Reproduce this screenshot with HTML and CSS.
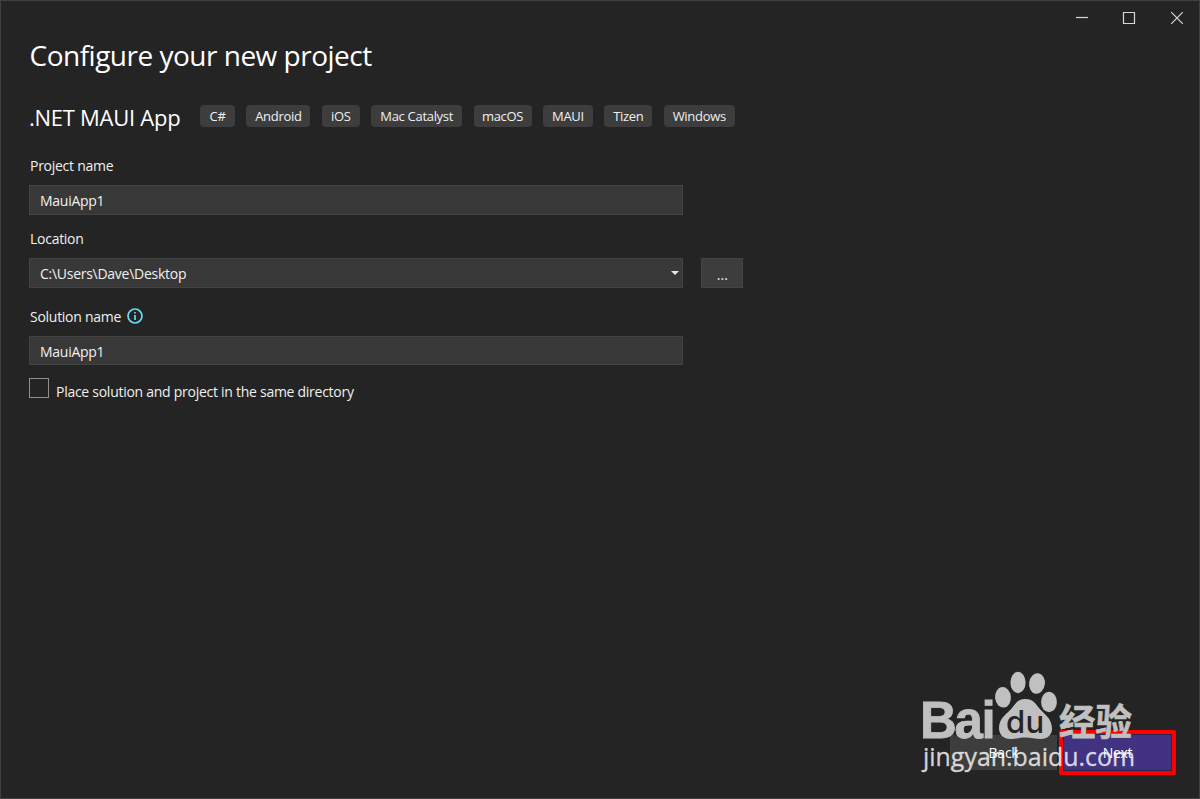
FILE: index.html
```html
<!DOCTYPE html>
<html lang="en">
<head>
    <meta charset="UTF-8">
    <meta name="viewport" content="width=device-width, initial-scale=1.0">
    <title>Configure your new project</title>
    <link rel="stylesheet" href="styles.css">
</head>
<body>
    <div class="window">
        <div class="window-controls">
            <svg width="14" height="14" viewBox="0 0 14 14"><path d="M1 6.5h12"/></svg>
            <svg width="14" height="14" viewBox="0 0 14 14"><path d="M1.5 1.5h11v11h-11z"/></svg>
            <svg width="14" height="14" viewBox="0 0 14 14"><path d="M1.2 1.2l11.6 11.6M12.8 1.2L1.2 12.8"/></svg>
        </div>

        <h1>Configure your new project</h1>

        <div class="template">
            <h2>.NET MAUI App</h2>
            <ul class="tags">
                <li style="width: 35px">C#</li>
                <li style="width: 64px">Android</li>
                <li style="width: 38px">iOS</li>
                <li style="width: 91px">Mac Catalyst</li>
                <li style="width: 58px">macOS</li>
                <li style="width: 50px">MAUI</li>
                <li style="width: 48px">Tizen</li>
                <li style="width: 71px">Windows</li>
            </ul>
        </div>

        <form id="projectForm">
            <div class="field">
                <label for="projectName">Project name</label>
                <input type="text" id="projectName" value="MauiApp1">
            </div>

            <div class="field">
                <label for="location">Location</label>
                <div class="location-row">
                    <div class="combo">
                        <input type="text" id="location" value="C:\Users\Dave\Desktop">
                        <svg width="8" height="4" viewBox="0 0 8 4"><path d="M0 0h8L4 4z"/></svg>
                    </div>
                    <button type="button" class="browse">...</button>
                </div>
            </div>

            <div class="field solution">
                <label for="solutionName">Solution name
                    <svg class="info" width="16" height="16" viewBox="0 0 16 16">
                        <circle cx="8" cy="8" r="7"/>
                        <path d="M8 7v5M8 4v1.6"/>
                    </svg>
                </label>
                <input type="text" id="solutionName" value="MauiApp1">
            </div>

            <label class="check">
                <input type="checkbox">
                <span>Place solution and project in the same directory</span>
            </label>
        </form>

        <div class="footer">
            <button type="button" class="back">Back</button>
            <button type="button" class="next">Next</button>
        </div>
    </div>

    <svg class="watermark" width="220" height="110" viewBox="0 0 220 110">
        <g class="mark">
            <text class="brand" x="0 34.5 61.5" y="72.5">Bai</text>
            <ellipse cx="83" cy="32.3" rx="7.9" ry="10.3" transform="rotate(-6 83 32.3)"/>
            <ellipse cx="98" cy="17.5" rx="7.6" ry="10.7"/>
            <ellipse cx="117" cy="18.5" rx="7.9" ry="10.3" transform="rotate(8 117 18.5)"/>
            <ellipse cx="129" cy="37" rx="7.9" ry="10.2"/>
            <path d="M105.500 34C113 34 115 38 119 43C124 49 132 53 132 64C132 70 127 74 121 74C115 74 111 72.500 105.500 72.500C100 72.500 96 74 90 74C84 74 79 70 79 63C79 53 87 49 92 43C96 38 98 34 105.500 34z"/>
            <text class="cn" x="139" y="70.5" textLength="73" lengthAdjust="spacingAndGlyphs">经验</text>
        </g>
        <text class="du" x="86 105.5" y="68">du</text>
        <text class="site" x="3" y="101" textLength="212" lengthAdjust="spacingAndGlyphs">jingyan.baidu.com</text>
    </svg>
</body>
</html>
```

FILE: styles.css
```css
* {
    box-sizing: border-box;
}
body {
    margin: 0;
    font-family: "Open Sans", "Noto Sans", sans-serif;
    font-size: 14px;
    letter-spacing: -0.27px;
    color: #f0f0f0;
    background-color: #242424;
}
.window {
    height: 799px;
    padding: 0 23px 0 28px;
    border: 1px solid #3f3f41;
    display: flex;
    flex-direction: column;
}
.window-controls {
    display: flex;
    justify-content: flex-end;
    gap: 33.4px;
    height: 34px;
    padding-top: 10px;
    margin-right: -7.6px;
}
.window-controls svg {
    fill: none;
    stroke: #d8d8d8;
    stroke-width: 1.2;
}
h1 {
    margin: 0;
    padding-left: 0.5px;
    font-size: 28px;
    font-weight: 400;
    line-height: 40px;
    letter-spacing: -0.5px;
    color: #fff;
}
.template {
    display: flex;
    align-items: flex-start;
    height: 55px;
    margin-top: 25px;
}
h2 {
    width: 171px;
    margin: 0;
    font-size: 22px;
    font-weight: 400;
    line-height: 34px;
    letter-spacing: -0.27px;
    white-space: nowrap;
    color: #fff;
}
.tags {
    display: flex;
    gap: 11.4px;
    margin: 5px 0 0;
    padding: 0;
    list-style: none;
}
.tags li {
    height: 22px;
    border-radius: 4px;
    background-color: #3d3d3d;
    font-size: 13px;
    line-height: 23px;
    letter-spacing: -0.3px;
    text-align: center;
    white-space: nowrap;
}
.field {
    height: 73px;
}
.field label {
    display: flex;
    align-items: center;
    height: 20px;
    margin-bottom: 10px;
    padding-left: 1px;
}
input[type="text"] {
    display: block;
    width: 654px;
    height: 30px;
    padding: 1px 10px 0;
    border: 1px solid #434343;
    background-color: #383838;
    color: #f0f0f0;
    font: inherit;
    letter-spacing: inherit;
    outline: none;
}
.location-row {
    display: flex;
    gap: 18.4px;
}
.combo {
    position: relative;
}
.combo svg {
    position: absolute;
    right: 4px;
    top: 13px;
    fill: #e6e6e6;
}
.browse {
    width: 42px;
    height: 30px;
    padding: 3px 0 0;
    border: 1px solid #434343;
    background-color: #3d3d3d;
    color: #f0f0f0;
    font: inherit;
}
.solution {
    margin-top: 5px;
}
.solution input[type="text"] {
    height: 29px;
}
.info {
    margin-left: 6px;
    fill: none;
    stroke: #6cd9f7;
    stroke-width: 1.7;
}
.check {
    display: flex;
    margin-top: -1px;
}
.check input {
    appearance: none;
    width: 20px;
    height: 20px;
    margin: 0 7px 0 0;
    border: 1px solid #8e8e8e;
}
.check span {
    line-height: 27px;
}
.footer {
    display: flex;
    gap: 2px;
    justify-content: flex-end;
    margin-top: auto;
    margin-bottom: 23px;
}
.footer button {
    border: 1px solid #3d3d3d;
    background-color: #3d3d3d;
    color: #fff;
    font: inherit;
    letter-spacing: inherit;
}
.footer .back {
    width: 107px;
    height: 35px;
    margin-top: 5px;
}
.footer .next {
    width: 117px;
    height: 45px;
    border: 4px solid #f00;
    border-radius: 2px;
    background-color: #413382;
    box-shadow: inset 0 0 0 1px #2c2550;
}
.watermark {
    position: absolute;
    left: 920px;
    top: 665px;
    overflow: visible;
    pointer-events: none;
    letter-spacing: 0;
}
.mark {
    fill: #c0c0c0;
}
.brand {
    font-family: "Liberation Sans", sans-serif;
    font-size: 51px;
    font-weight: 700;
    stroke: #c0c0c0;
    stroke-width: 0.8;
}
.cn {
    font-family: "Noto Sans CJK SC", sans-serif;
    font-size: 37px;
    font-weight: 700;
    stroke: #c0c0c0;
    stroke-width: 0.6;
}
.du {
    font-family: Inter, sans-serif;
    font-size: 31px;
    font-weight: 500;
    fill: #252525;
}
.site {
    font-family: "Open Sans", sans-serif;
    font-size: 26px;
    fill: #fff;
    fill-opacity: 0.78;
    stroke: #fff;
    stroke-opacity: 0.4;
    stroke-width: 0.6;
}
```
